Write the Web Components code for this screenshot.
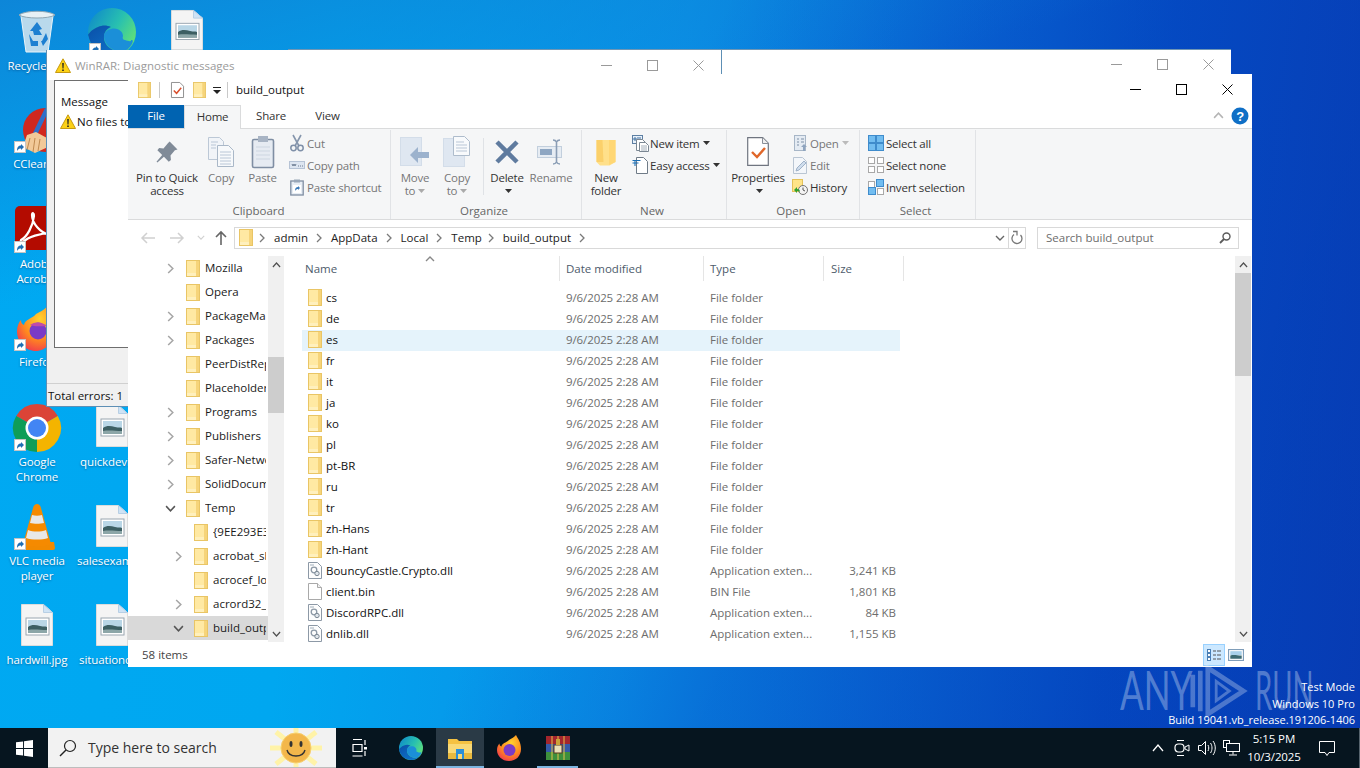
<!DOCTYPE html>
<html lang="en">
<head>
<meta charset="utf-8">
<title>build_output</title>
<style>
  html, body { margin: 0; height: 100%; overflow: hidden; }
  body { font: 11.5px "Open Sans", "Noto Sans", sans-serif; }
</style>
</head>
<body>
<win-desktop></win-desktop>
<script>
const PICTURE = `<path d="M.5.5h22l9 8v33H.5z" fill="#f4f4f4" stroke="#dcdcdc"/><path d="M22.5.5v8h9z" fill="#cfe3f5" stroke="#b8cfe4"/><rect x="5" y="14" width="23" height="17" fill="#fff" stroke="#9aa6b0"/><rect x="7" y="16" width="19" height="7" fill="#b9d6e6"/><path d="M7 23c4-3 8-2 12-1s5 0 7 1v6H7z" fill="#3d5f63"/><path d="M7 26c6-1 12 0 19 0v3H7z" fill="#8ca6a8"/>`
const EDGE_GRADIENT = `<defs><linearGradient id="g" x1="0" y1="0" x2="1" y2=".6"><stop offset="0" stop-color="#0c84cc"/><stop offset=".6" stop-color="#28c0b0"/><stop offset="1" stop-color="#5fe07a"/></linearGradient><linearGradient id="b" x1="0" y1="0" x2="1" y2="1"><stop offset="0" stop-color="#0a4fa8"/><stop offset="1" stop-color="#0f7ad0"/></linearGradient></defs>`
const ICONS = {
  folder: [14, 17, `<rect x=".5" y=".5" width="13" height="16" fill="#ffe9a3" stroke="#e9c565"/><path d="M10 1h3v15h-3z" fill="#f6d47a"/><path d="M1 13h9v3H1z" fill="#fff0bd"/>`],
  titlecheck: [14, 17, `<path d="M.5.5h9l4 4v12H.5z" fill="#fff" stroke="#8a8a8a"/><path d="M3 9l3 3 5-6" fill="none" stroke="#d9502e" stroke-width="1.6"/>`],
  dll: [14, 17, `<path d="M.5.5h9l4 4v12H.5z" fill="#fdfdfd" stroke="#8d99a6"/><circle cx="6" cy="8" r="2.8" fill="none" stroke="#8d99a6" stroke-width="1.3"/><circle cx="9" cy="11.5" r="2.2" fill="#dfe5ea" stroke="#7c8894"/><rect x="2" y="2" width="4" height="2" fill="#cfd6dc"/>`],
  file: [14, 17, `<path d="M.5.5h9l4 4v12H.5z" fill="#fff" stroke="#a9a9a9"/><path d="M9.5.5v4h4" fill="#f1f1f1" stroke="#a9a9a9"/>`],
  pin: [32, 32, `<path d="M19 4l9 9-3 1-5 6 .5 5-2.500 2-5.500-5.500L5 28l-1-1 6.500-7.500L5 14l2-2.500 5 .5 5-6z" fill="#808b98"/>`],
  copy: [28, 32, `<path d="M1.500 1.500h11l4 4v18h-15z" fill="#f1f4f8" stroke="#bcc8d6"/><path d="M10.500 9.500h11l5 5v16h-16z" fill="#f7f9fb" stroke="#aab8c8"/><path d="M4 6h7M4 9h5M4 12h5M13 16h11M13 19h11M13 22h11M13 25h11M13 28h11" stroke="#b9c6d6"/>`],
  paste: [24, 34, `<rect x="1.500" y="4.500" width="21" height="28" rx="1.500" fill="#e6ebf2" stroke="#7f8ea3" stroke-width="1.600"/><rect x="7" y="1" width="10" height="6" fill="#a8b4c4"/><path d="M5 12h14M5 16h14M5 20h14M5 24h14" stroke="#cdd6e1"/>`],
  cut: [16, 18, `<path d="M4 1l6 11M12 1L6 12" stroke="#8696ad" stroke-width="1.600" fill="none"/><circle cx="4.500" cy="14" r="2.700" fill="none" stroke="#7f90a8" stroke-width="1.500"/><circle cx="11.500" cy="14" r="2.700" fill="none" stroke="#7f90a8" stroke-width="1.500"/>`],
  copypath: [16, 12, `<rect x=".5" y="2.500" width="15" height="7" fill="#dde5f0" stroke="#b6c3d5"/><path d="M3 5l1 2 1-2 1 2 1-2M9 7h1M11 7h1M13 7h1" stroke="#6d7d93" fill="none"/>`],
  pasteshortcut: [14, 17, `<rect x=".8" y="2" width="12.400" height="14" fill="#e7edf4" stroke="#7f8ea3" stroke-width="1.300"/><rect x="4" y=".5" width="6" height="3" fill="#99a7b8"/><rect x="3" y="6" width="8" height="8" fill="#fff"/><path d="M5 12c0-3 1-4 3-4V7l2 2-2 2v-1c-1 0-2 .5-3 2z" fill="#3a79b8"/>`],
  moveto: [30, 30, `<rect x=".5" y=".5" width="21" height="28" fill="#dfe7f1" stroke="#d3dde9"/><path d="M29 15H18v-5l-8 8 8 8v-5h11z" fill="#9cb2cd"/>`],
  copyto: [28, 31, `<rect x=".5" y="2.500" width="21" height="28" fill="#dfe7f1" stroke="#d3dde9"/><path d="M10.500.5h11l5 5v14h-16z" fill="#f8fafc" stroke="#aebccc"/><path d="M13 6h8M13 9h11M13 12h11M13 15h11" stroke="#b9c6d6"/>`],
  del: [26, 26, `<path d="M3 3l20 20M23 3L3 23" stroke="#5f7b9f" stroke-width="4.500" fill="none"/>`],
  rename: [28, 26, `<rect x=".5" y="7.500" width="24" height="11" fill="#e6ecf3" stroke="#c2cfdd"/><rect x="3" y="10" width="12" height="6" fill="#8ea6c2"/><path d="M16 1c2 0 3 1 3.500 2 .5-1 1.500-2 3.500-2M19.500 3v20M16 25c2 0 3-1 3.500-2 .5 1 1.500 2 3.500 2" stroke="#8a9db5" stroke-width="1.600" fill="none"/>`],
  newfolder: [20, 28, `<path d="M.5 2h19v22l-6 3.500H4L.5 24z" fill="#ffe08a"/><path d="M.5 2h6l1 22H.5z" fill="#fbd06a"/><path d="M13 2h6.500v22L13 27z" fill="#ffd775"/>`],
  newitem: [17, 17, `<rect x=".5" y=".5" width="10" height="8" fill="#e8f1fa" stroke="#5d7fa3"/><path d="M2 3h2v2H2zM5 3h4" stroke="#3f6f9f" fill="none"/><path d="M4.500 4.500h6l3 3v8h-9z" fill="#fff" stroke="#7b8793"/><path d="M7.500 7.500h6l3 3v6h-9z" fill="#fff" stroke="#7b8793"/><path d="M9 11h6M9 13h6M9 15h6" stroke="#a4afba"/>`],
  easyaccess: [16, 17, `<path d="M4.500.5h7l4 4v12h-11z" fill="#fff" stroke="#6f7b87"/><path d="M.5 3.500h8M.5 6h6M3 3.500V9" stroke="#1c6fb5" stroke-width="1.100" fill="none"/>`],
  properties: [22, 29, `<path d="M.7.7h15l5.600 5.600v22H.7z" fill="#fff" stroke="#6f7580" stroke-width="1.200"/><path d="M15.500.7v5.800h5.800" fill="#f0f0f0" stroke="#8a9099"/><path d="M5 15l5 5 8-9" fill="none" stroke="#e0672a" stroke-width="2.400"/>`],
  open: [13, 16, `<rect x=".5" y=".5" width="11" height="15" fill="#e4ebf3" stroke="#a7b6c7"/><path d="M3 4h2M3 7h2M3 10h2M7 4h3M7 7h3" stroke="#7d8fa6"/><path d="M9 16v-4H7l3-3 3 3h-2v4z" fill="#8ea4bf"/>`],
  edit: [14, 17, `<path d="M.5.5h9l4 4v12H.5z" fill="#f3f6fa" stroke="#b9c5d3"/><path d="M3 14l1-3 7-7 2 2-7 7z" fill="#cfdded" stroke="#9fb2c8"/>`],
  history: [16, 16, `<rect x=".5" y=".5" width="10" height="12" fill="#ffe488" stroke="#e4c259"/><circle cx="11" cy="11" r="4.500" fill="#f3f3f3" stroke="#737373"/><path d="M11 8.500V11l2 1" stroke="#555" fill="none"/><path d="M2 11l3-3v2c2 0 3 1 3 3-1-1-2-1-3-1v2z" fill="#2fa02f"/>`],
  selectall: [16, 16, `<rect x=".5" y=".5" width="7" height="7" fill="#72bdf0" stroke="#3f8ccc"/><rect x="8.500" y=".5" width="7" height="7" fill="#72bdf0" stroke="#3f8ccc"/><rect x=".5" y="8.500" width="7" height="7" fill="#72bdf0" stroke="#3f8ccc"/><rect x="8.500" y="8.500" width="7" height="7" fill="#72bdf0" stroke="#3f8ccc"/>`],
  selectnone: [16, 16, `<g fill="#fff" stroke="#a8a8a8"><rect x=".5" y=".5" width="6" height="6"/><rect x="9.500" y=".5" width="6" height="6"/><rect x=".5" y="9.500" width="6" height="6"/><rect x="9.500" y="9.500" width="6" height="6"/></g>`],
  invert: [16, 16, `<rect x=".5" y="2.500" width="6" height="6" fill="#fff" stroke="#a8a8a8"/><rect x="8.500" y=".5" width="7" height="7" fill="#72bdf0" stroke="#3f8ccc"/><rect x=".5" y="8.500" width="7" height="7" fill="#72bdf0" stroke="#3f8ccc"/><rect x="9.500" y="9.500" width="6" height="6" fill="#fff" stroke="#a8a8a8"/>`],
  warning: [16, 15, `<path d="M8 .8l7.500 13.700H.5z" fill="#fcd116" stroke="#c79a10"/><path d="M7.200 5h1.600l-.3 5.500h-1zM7.200 11.500h1.600v1.600H7.200z" fill="#222"/>`],
  back: [14, 12, `<path d="M6 1L1 6l5 5M1 6h13" fill="none" stroke="currentColor" stroke-width="1.500"/>`],
  forward: [14, 12, `<path d="M8 1l5 5-5 5M13 6H0" fill="none" stroke="currentColor" stroke-width="1.500"/>`],
  up: [12, 14, `<path d="M1 6l5-5 5 5M6 1v13" fill="none" stroke="currentColor" stroke-width="1.600"/>`],
  chevronR: [6, 10, `<path d="M1 1l4 4-4 4" fill="none" stroke="currentColor" stroke-width="1.300"/>`],
  chevronD: [10, 6, `<path d="M1 1l4 4 4-4" fill="none" stroke="currentColor" stroke-width="1.400"/>`],
  chevronU: [10, 6, `<path d="M1 5l4-4 4 4" fill="none" stroke="currentColor" stroke-width="1.400"/>`],
  refresh: [12, 13, `<path d="M3 3.500A5 5 0 1 0 9.500 4" fill="none" stroke="currentColor" stroke-width="1.300"/><path d="M2 .5h4v4" fill="none" stroke="currentColor" stroke-width="1.300"/>`],
  search: [12, 12, `<circle cx="7.500" cy="4.500" r="3.500" fill="none" stroke="#5a5a5a" stroke-width="1.400"/><path d="M5 7l-4 4" stroke="#5a5a5a" stroke-width="1.800"/>`],
  help: [18, 18, `<circle cx="9" cy="9" r="8.500" fill="#0f6fc6"/><text x="9" y="13.500" text-anchor="middle" font-family="Liberation Sans" font-weight="700" font-size="13" fill="#fff">?</text>`],
  details: [14, 12, `<g fill="#fff" stroke="#4a7fb5"><rect x=".5" y=".5" width="3" height="3"/><rect x=".5" y="4.500" width="3" height="3"/><rect x=".5" y="8.500" width="3" height="3"/></g><path d="M6 2h3M10 2h4M6 6h3M10 6h4M6 10h3M10 10h4" stroke="#555"/>`],
  large: [14, 11, `<rect x=".5" y=".5" width="13" height="10" fill="#fff" stroke="#7f9db9"/><rect x="2" y="2" width="10" height="3.500" fill="#a8d0ea"/><path d="M2 9V6c3-1 6 0 10 0v3z" fill="#3c6a72"/>`],
  shortcut: [12, 12, `<rect x=".5" y=".5" width="11" height="11" fill="#fff" stroke="#c4c4c4"/><path d="M3 10c0-4 1.500-5.500 4-5.500V3l3 3-3 3V7.500C5.500 7.500 4 8 3 10z" fill="#1f6fb5"/>`],
  recycle: [38, 42, `<path d="M3 5l5 36h22l5-36z" fill="#c9e0ee" fill-opacity=".92" stroke="#e9f3f8"/><path d="M1 4c6-5 30-5 36 0-6 4-30 4-36 0z" fill="#e7f0f5" stroke="#8ea6b4"/><path d="M19 11l5 7-3 1 3 5h-8l-1-4-3 0zM11 23l4 7h5v5h-7zM28 22l-4 8h-1l2 5 5-7z" fill="#1d7fd1"/>`],
  edge: [48, 48, `${EDGE_GRADIENT}<circle cx="24" cy="24" r="24" fill="url(#g)"/><path d="M0 23C0 37 11 48 25 48c7 0 12-3 15-7-3 2-8 3-12 2-7-2-13-8-12-15 .5-5 4-8 7-9-4-2-9-2-13 0C5 21 1 24 0 28z" fill="url(#b)"/><path d="M16 28c0 7 6 13 12 15 4 1 9 0 12-2 3-3 5-6 5-9-2 2-5 1-8 0-2 0-3-2-2-4 0-4-5-9-12-7-4 1-7 4-7 7z" fill="#1b8fd8"/>`],
  picture: [32, 42, PICTURE],
  ccleaner: [30, 44, `<circle cx="22" cy="22" r="22" fill="#d0281f"/><path d="M24 1L11 28" stroke="#2f6fc9" stroke-width="4.500"/><path d="M4 27l9-3 11 6 1 9-13 6-12-6z" fill="#f2c998"/><path d="M7 30l-3 12M12 30l-2 14M17 31l-2 12" stroke="#c08a50"/>`],
  acrobat: [40, 44, `<rect width="40" height="44" rx="5" fill="#b30b00"/><path d="M6 34c6-3 12-14 13-24 .3-3-2-4-2-1 0 8 8 18 18 20 3 .5 3-2 0-2-9 0-22 4-27 9-2 2-3 0-2-2z" fill="none" stroke="#fff" stroke-width="2.200"/>`],
  firefox: [38, 46, `<defs><radialGradient id="f" cx=".6" cy=".3" r=".8"><stop offset="0" stop-color="#ffd22e"/><stop offset=".55" stop-color="#ff8a1e"/><stop offset="1" stop-color="#ef2f55"/></radialGradient></defs><path d="M31 0c3 8 7 13 7 24 0 12-9 22-19 22C8 46 0 37 0 26c0-5 2-9 4-11 0 3 1 4 3 5 1-6 8-6 12-11 5-3 9-4 12-9z" fill="url(#f)"/><circle cx="21" cy="26" r="8.500" fill="#7a3bc7"/><path d="M13 20c5-4 13-3 17 1-5 0-12 1-17-1z" fill="#c04ca8"/>`],
  chrome: [48, 48, `<path d="M24 24L3.200 12A24 24 0 0 1 44.800 12z" fill="#db4437"/><path d="M24 24L44.800 12A24 24 0 0 1 24 48z" fill="#f4b400"/><path d="M24 24L24 48A24 24 0 0 1 3.200 12z" fill="#0f9d58"/><circle cx="24" cy="24" r="11.500" fill="#fff"/><circle cx="24" cy="24" r="9" fill="#4285f4"/>`],
  vlc: [36, 46, `<path d="M1 38h34l1 6c0 1-1 2-2 2H2c-1 0-2-1-2-2z" fill="#f28a00"/><path d="M18 0c2 0 3 1 4 4l10 36c-4 3-24 3-28 0L14 4c1-3 2-4 4-4z" fill="#f58a00"/><path d="M13 11c3 1 7 1 10 0l2 8c-4 1-10 1-14 0zM9 26c5 2 13 2 18 0l2 8c-6 2-16 2-22 0z" fill="#e8e8e8"/>`],
  win: [18, 18, `<path d="M0 2.500l7.500-1v7H0zM8.500 1.400L18 0v8.500H8.500zM0 9.500h7.500v7l-7.500-1zM8.500 9.500H18V18l-9.500-1.400z" fill="#fff"/>`],
  magnifier: [18, 18, `<circle cx="11" cy="7" r="5.500" fill="none" stroke="#222" stroke-width="1.200"/><path d="M7 11l-6 6" stroke="#222" stroke-width="1.400"/>`],
  smiley: [60, 40, `<g stroke="#fff3a8" stroke-width="5"><path d="M30-6V46M4 20h52M10 4l40 32M50 4L10 36"/></g><circle cx="30" cy="20" r="15" fill="#f3b74b"/><circle cx="30" cy="20" r="15" fill="none" stroke="#f7cf6e"/><ellipse cx="25" cy="16" rx="1.500" ry="3" fill="#333"/><ellipse cx="35" cy="16" rx="1.500" ry="3" fill="#333"/><path d="M21 22c2 8 16 8 18 0" fill="none" stroke="#333" stroke-width="1.400"/>`],
  taskview: [16, 18, `<path d="M1 .5h9M.5 17h10M1 5.500h9v7H1zM13 1v5M13 12v5" stroke="#fff" stroke-width="1.200" fill="none"/><rect x="12" y="8" width="3" height="2.500" fill="#fff"/>`],
  edgesmall: [48, 48, `${EDGE_GRADIENT}<circle cx="24" cy="24" r="24" fill="url(#g)"/><path d="M0 23C0 37 11 48 25 48c7 0 12-3 15-7-3 2-8 3-12 2-7-2-13-8-12-15 .5-5 4-8 7-9-4-2-9-2-13 0C5 21 1 24 0 28z" fill="url(#b)"/><path d="M16 28c0 7 6 13 12 15 4 1 9 0 12-2 3-3 5-6 5-9-2 2-5 1-8 0-2 0-3-2-2-4 0-4-5-9-12-7-4 1-7 4-7 7z" fill="#1b8fd8"/>`],
  explorer: [24, 22, `<path d="M0 2h9l2 2h13v4H0z" fill="#f5c242"/><rect y="7" width="24" height="15" fill="#f9d976"/><rect x="0" y="16" width="24" height="6" fill="#e9b93f"/><rect x="8" y="12" width="8" height="10" fill="#2b8fd9"/><rect x="10" y="17" width="4" height="5" fill="#f9d976"/>`],
  firefoxsmall: [24, 26, `<defs><radialGradient id="f" cx=".6" cy=".3" r=".8"><stop offset="0" stop-color="#ffd22e"/><stop offset=".55" stop-color="#ff8a1e"/><stop offset="1" stop-color="#ef2f55"/></radialGradient></defs><path d="M19 0c2 4 5 7 5 14 0 7-5 12-12 12S0 21 0 15c0-3 1-5 2.500-6.500 0 2 .5 2.500 2 3C5 8 9 8 12 5c3-1.500 5-3 7-5z" fill="url(#f)"/><circle cx="12.500" cy="15" r="6" fill="#7a3bc7"/>`],
  winrar: [24, 24, `<rect width="24" height="8" fill="#a3262d"/><rect y="8" width="24" height="8" fill="#3559a8"/><rect y="16" width="24" height="8" fill="#3d8f3c"/><path d="M6 0v24M12 0v24M18 0v24" stroke="#e7c14a" stroke-width="1"/><rect x="8" y="9" width="8" height="8" fill="#e9dfb8" stroke="#5c3b1f"/><path d="M10 3h4v6h-4z" fill="#caa23a"/>`],
  caretup: [12, 8, `<path d="M1 7l5-6 5 6" fill="none" stroke="#fff" stroke-width="1.300"/>`],
  meet: [16, 18, `<path d="M3 1.500h7M3 16.500h7" stroke="#fff"/><rect x="1" y="5" width="9" height="8" rx="3.500" fill="none" stroke="#fff" stroke-width="1.200"/><path d="M11 8l4-2v6l-4-2z" fill="none" stroke="#fff"/>`],
  volume: [17, 16, `<path d="M.5 5.500h3l4-4v13l-4-4h-3z" fill="none" stroke="#fff"/><path d="M10 5c1 2 1 4 0 6M12.500 3c2 3 2 7 0 10M15 1c3 4 3 10 0 14" fill="none" stroke="#fff"/>`],
  network: [17, 16, `<rect x=".5" y=".5" width="6" height="7" fill="none" stroke="#fff"/><rect x="3.500" y="3.500" width="13" height="8" fill="#071623" stroke="#fff"/><path d="M10 11.500v3M6 15h8" stroke="#fff"/>`],
  notify: [16, 15, `<path d="M.5.5h15v11H10l-2 3-2-3H.5z" fill="none" stroke="#fff"/>`],
  playlogo: [62, 54, `<g fill="none" stroke="#dfe9f5" stroke-opacity=".32" stroke-width="5"><path d="M3 10v34M11 6v42"/><path d="M19 3l38 24-38 24z"/><path d="M28 17l14 10-14 10z" stroke-width="3"/></g>`],
}

class UiIcon extends HTMLElement {
  constructor() {
    super()
    this.attachShadow({ mode: 'open' })
  }

  connectedCallback() {
    const [w, h, body] = ICONS[this.getAttribute('name')]
    const width = this.getAttribute('w') || w
    const height = this.getAttribute('h') || h
    this.shadowRoot.innerHTML = `
      <style>
        :host { display: inline-block; line-height: 0; flex: none; width: ${width}px; height: ${height}px; }
        svg { display: block; width: 100%; height: 100%; overflow: visible; }
      </style>
      <svg viewBox="0 0 ${w} ${h}" preserveAspectRatio="none">${body}</svg>`
  }
}

class DesktopIcon extends HTMLElement {
  constructor() {
    super()
    this.attachShadow({ mode: 'open' })
    this.shadowRoot.innerHTML = `
      <style>
        :host { position: absolute; width: 74px; display: flex; flex-direction: column; align-items: center; color: #fff; font: 11.5px/15px "Open Sans", sans-serif; letter-spacing: -.1px; }
        .cell { height: 48px; display: flex; align-items: center; justify-content: center; width: 100%; position: relative; }
        .arrow { position: absolute; left: 14px; top: 35px; display: none; }
        :host([shortcut]) .arrow { display: block; }
        .label { padding-top: 2px; text-align: center; text-shadow: 0 1px 2px rgba(0, 30, 80, .45); }
        :host([clip]) .label { align-self: flex-start; margin-left: var(--lm, 5px); white-space: nowrap; }
      </style>
      <div class="cell"><slot name="icon"></slot><ui-icon class="arrow" name="shortcut"></ui-icon></div>
      <div class="label"><slot></slot></div>`
  }

  connectedCallback() {
    this.style.left = this.getAttribute('x') + 'px'
    this.style.top = this.getAttribute('y') + 'px'
  }
}

class WindowControls extends HTMLElement {
  constructor() {
    super()
    this.attachShadow({ mode: 'open' })
    this.shadowRoot.innerHTML = `
      <style>
        :host { display: flex; color: #9a9a9a; }
        :host([active]) { color: #000; }
        div { width: 46px; display: flex; align-items: center; justify-content: center; }
        svg { width: 11px; height: 11px; }
      </style>
      <div><svg viewBox="0 0 11 11"><path d="M0 5.500h11" stroke="currentColor"/></svg></div>
      <div><svg viewBox="0 0 11 11"><rect x=".5" y=".5" width="10" height="10" fill="none" stroke="currentColor"/></svg></div>
      <div><svg viewBox="0 0 11 11"><path d="M.5.5l10 10M10.500.5l-10 10" stroke="currentColor" fill="none"/></svg></div>`
  }
}

class BackWindow extends HTMLElement {
  constructor() {
    super()
    this.attachShadow({ mode: 'open' })
    this.shadowRoot.innerHTML = `
      <style>
        :host { position: absolute; left: 288px; top: 49px; width: 943px; height: 400px; background: #fff; border-top: 1px solid #6f96b5; box-sizing: border-box; display: flex; flex-direction: column; }
        window-controls { height: 28px; align-self: flex-end; }
      </style>
      <window-controls></window-controls>`
  }
}

class RarWindow extends HTMLElement {
  constructor() {
    super()
    this.attachShadow({ mode: 'open' })
    this.shadowRoot.innerHTML = `
      <style>
        :host { position: absolute; left: 46px; top: 50px; width: 676px; height: 357px; background: #f0f0f0; box-sizing: border-box; border: 1px solid #5d8fb5; border-top: 0; display: flex; flex-direction: column; color: #111; }
        .title { height: 30px; background: #fff; display: flex; align-items: center; padding-left: 8px; gap: 4px; color: #9b9b9b; }
        .title span { flex: 1; }
        .box { margin-left: 7px; width: 660px; height: 268px; background: #fff; border: 1px solid #fff; border-top-color: #6e6e6e; border-left-color: #6e6e6e; border-bottom-color: #6e6e6e; box-sizing: border-box; padding: 13px 0 0 6px; }
        .row { display: flex; align-items: center; gap: 1px; margin: 5px 0 0 -1px; }
        .gap { flex: 1; }
        .status { height: 23px; border-top: 1px solid #d0d0d0; display: flex; align-items: center; padding: 1px 0 0 1px; box-sizing: border-box; }
      </style>
      <div class="title"><ui-icon name="warning"></ui-icon><span>WinRAR: Diagnostic messages</span><window-controls></window-controls></div>
      <div class="box"><div>Message</div><div class="row"><ui-icon name="warning"></ui-icon><span>No files to</span></div></div>
      <div class="gap"></div>
      <div class="status">Total errors: 1</div>`
  }
}

class RibbonGroup extends HTMLElement {
  constructor() {
    super()
    this.attachShadow({ mode: 'open' })
    const pad = this.getAttribute('pad') || 0
    const shift = this.getAttribute('shift') || 4
    this.shadowRoot.innerHTML = `
      <style>
        :host { display: flex; flex-direction: column; box-sizing: border-box; height: 89px; margin-top: 1px; border-right: 1px solid #e1e3e6; padding-top: 2px; flex: none; }
        .body { flex: 1; display: flex; padding-left: ${pad}px; }
        .label { text-align: center; color: #666; height: 16px; line-height: 16px; padding-right: ${shift}px; }
      </style>
      <div class="body"><slot></slot></div>
      <div class="label">${this.getAttribute('label')}</div>`
  }
}

class RibbonBig extends HTMLElement {
  constructor() {
    super()
    this.attachShadow({ mode: 'open' })
    this.shadowRoot.innerHTML = `
      <style>
        :host { display: flex; flex-direction: column; align-items: center; flex: none; line-height: 13px; color: #333; text-align: center; letter-spacing: -.2px; }
        :host([dim]) { color: #777; }
        .icon { height: 39px; display: flex; align-items: center; justify-content: center; box-sizing: border-box; }
      </style>
      <div class="icon"><slot name="icon"></slot></div>
      <div><slot></slot></div>`
  }
}

class RibbonSmall extends HTMLElement {
  constructor() {
    super()
    this.attachShadow({ mode: 'open' })
    this.shadowRoot.innerHTML = `
      <style>
        :host { display: flex; align-items: center; height: 22px; color: #333; white-space: nowrap; letter-spacing: -.2px; }
        :host([dim]) { color: #777; }
        .icon { width: 18px; margin-right: 1px; display: flex; justify-content: center; }
      </style>
      <div class="icon"><slot name="icon"></slot></div>
      <slot></slot>`
  }
}

const caret = (color = '#333') => `<svg width="7" height="4" viewBox="0 0 7 4" style="margin-left:3px;vertical-align:2px"><path d="M0 0h7L3.500 4z" fill="${color}"/></svg>`

class ExplorerRibbon extends HTMLElement {
  constructor() {
    super()
    this.attachShadow({ mode: 'open' })
    this.shadowRoot.innerHTML = `
      <style>
        :host { display: block; height: 91px; background: #f5f6f7; border-bottom: 1px solid #dadbdc; box-sizing: border-box; flex: none; }
        .row { display: flex; }
        .col { display: flex; flex-direction: column; }
        .sep { width: 1px; height: 57px; background: #dfe2e6; margin: 6px 3px 0 6px; }
        .d { display: block; margin: 0 auto; }
      </style>
      <div class="row">
        <ribbon-group label="Clipboard" pad="6" shift="1" style="width:263px">
          <ribbon-big style="width:66px"><ui-icon slot="icon" name="pin" w="28" h="28"></ui-icon>Pin to Quick<br>access</ribbon-big>
          <ribbon-big dim style="width:42px"><ui-icon slot="icon" name="copy"></ui-icon>Copy</ribbon-big>
          <ribbon-big dim style="width:41px"><ui-icon slot="icon" name="paste"></ui-icon>Paste</ribbon-big>
          <div class="col" style="margin-left:5px">
            <ribbon-small dim><ui-icon slot="icon" name="cut"></ui-icon>Cut</ribbon-small>
            <ribbon-small dim><ui-icon slot="icon" name="copypath"></ui-icon>Copy path</ribbon-small>
            <ribbon-small dim><ui-icon slot="icon" name="pasteshortcut"></ui-icon>Paste shortcut</ribbon-small>
          </div>
        </ribbon-group>
        <ribbon-group label="Organize" pad="5" style="width:191px">
          <ribbon-big dim style="width:38px"><ui-icon slot="icon" name="moveto"></ui-icon>Move<br>to${caret('#aaa')}</ribbon-big>
          <ribbon-big dim style="width:40px;margin-left:3px"><ui-icon slot="icon" name="copyto"></ui-icon>Copy<br>to${caret('#aaa')}</ribbon-big>
          <div class="sep"></div>
          <ribbon-big style="width:40px"><ui-icon slot="icon" name="del"></ui-icon>Delete<span class="d">${caret()}</span></ribbon-big>
          <ribbon-big dim style="width:46px;margin-left:1px"><ui-icon slot="icon" name="rename"></ui-icon>Rename</ribbon-big>
        </ribbon-group>
        <ribbon-group label="New" pad="4" style="width:145px">
          <ribbon-big style="width:40px"><ui-icon slot="icon" name="newfolder"></ui-icon>New<br>folder</ribbon-big>
          <div class="col" style="margin-left:5px">
            <ribbon-small><ui-icon slot="icon" name="newitem"></ui-icon>New item${caret()}</ribbon-small>
            <ribbon-small><ui-icon slot="icon" name="easyaccess"></ui-icon>Easy access${caret()}</ribbon-small>
          </div>
        </ribbon-group>
        <ribbon-group label="Open" pad="3" style="width:133px">
          <ribbon-big style="width:56px"><ui-icon slot="icon" name="properties"></ui-icon>Properties<span class="d">${caret()}</span></ribbon-big>
          <div class="col" style="margin-left:5px">
            <ribbon-small dim><ui-icon slot="icon" name="open"></ui-icon>Open${caret('#bbb')}</ribbon-small>
            <ribbon-small dim><ui-icon slot="icon" name="edit"></ui-icon>Edit</ribbon-small>
            <ribbon-small><ui-icon slot="icon" name="history"></ui-icon>History</ribbon-small>
          </div>
        </ribbon-group>
        <ribbon-group label="Select" pad="7" style="width:116px">
          <div class="col">
            <ribbon-small><ui-icon slot="icon" name="selectall"></ui-icon>Select all</ribbon-small>
            <ribbon-small><ui-icon slot="icon" name="selectnone"></ui-icon>Select none</ribbon-small>
            <ribbon-small><ui-icon slot="icon" name="invert"></ui-icon>Invert selection</ribbon-small>
          </div>
        </ribbon-group>
      </div>`
  }
}

class AddressBar extends HTMLElement {
  constructor() {
    super()
    this.attachShadow({ mode: 'open' })
    const crumbs = ['admin', 'AppData', 'Local', 'Temp', 'build_output']
    this.shadowRoot.innerHTML = `
      <style>
        :host { display: flex; align-items: center; height: 36px; flex: none; color: #333; box-sizing: border-box; padding-bottom: 1px; padding-left: 5px; }
        .nav { width: 29px; display: flex; justify-content: center; color: #d0d0d0; }
        .nav.fwd { width: 30px; }
        .nav.small { width: 17px; }
        .nav.up { width: 24px; color: #666; margin-right: 1px; }
        .box { height: 22px; box-sizing: border-box; border: 1px solid #d9d9d9; display: flex; align-items: center; background: #fff; }
        .path { width: 775px; padding-left: 4px; color: #222; }
        .path ui-icon.sep { color: #7a7a7a; margin: 0 9px 0 8px; }
        .path ui-icon.first { margin: 0 9px 0 6px; }
        .path span:nth-of-type(4) { margin-right: -2px; }
        .drop { margin-left: auto; margin-right: 3px; color: #666; }
        .refresh { width: 18px; margin-left: -1px; justify-content: center; color: #777; }
        .search { width: 202px; margin-left: 11px; padding: 0 7px 0 8px; justify-content: space-between; color: #6d6d6d; }
      </style>
      <div class="nav"><ui-icon name="back"></ui-icon></div>
      <div class="nav fwd"><ui-icon name="forward"></ui-icon></div>
      <div class="nav small"><ui-icon name="chevronD" w="8" h="5"></ui-icon></div>
      <div class="nav up"><ui-icon name="up"></ui-icon></div>
      <div class="box path">
        <ui-icon name="folder"></ui-icon>
        <ui-icon class="sep first" name="chevronR"></ui-icon>
        ${crumbs.map(c => `<span>${c}</span><ui-icon class="sep" name="chevronR"></ui-icon>`).join('')}
        <ui-icon class="drop" name="chevronD"></ui-icon>
      </div>
      <div class="box refresh"><ui-icon name="refresh"></ui-icon></div>
      <div class="box search"><span>Search build_output</span><ui-icon name="search"></ui-icon></div>`
  }
}

class ScrollBar extends HTMLElement {
  constructor() {
    super()
    this.attachShadow({ mode: 'open' })
    this.shadowRoot.innerHTML = `
      <style>
        :host { display: flex; flex-direction: column; width: 16px; background: #f0f0f0; flex: none; color: #505050; }
        .btn { height: 17px; display: flex; align-items: center; justify-content: center; flex: none; }
        .track { flex: 1; }
        .thumb { background: #cdcdcd; }
      </style>
      <div class="btn"><ui-icon name="chevronU" w="9" h="6"></ui-icon></div>
      <div class="track"><div class="thumb" style="margin-top:${this.getAttribute('start')}px;height:${this.getAttribute('size')}px"></div></div>
      <div class="btn"><ui-icon name="chevronD" w="9" h="6"></ui-icon></div>`
  }
}

class TreeRow extends HTMLElement {
  constructor() {
    super()
    this.attachShadow({ mode: 'open' })
  }

  connectedCallback() {
    const level = Number(this.getAttribute('level') || 0)
    const state = this.getAttribute('state')
    const chevron = state === 'closed' ? '<ui-icon name="chevronR" w="7" h="11" style="color:#a6a6a6"></ui-icon>'
      : state === 'open' ? '<ui-icon name="chevronD" w="11" h="7" style="color:#555"></ui-icon>' : ''
    this.shadowRoot.innerHTML = `
      <style>
        :host { display: flex; align-items: center; height: 24px; padding-left: ${34 + level * 8}px; padding-right: 2px; white-space: nowrap; color: #1a1a1a; }
        :host([selected]) { background: #d9d9d9; }
        .chev { width: 16px; display: flex; justify-content: center; margin-right: 8px; flex: none; }
        span { margin-left: 5px; padding-bottom: 2px; overflow: hidden; min-width: 0; }
      </style>
      <div class="chev">${chevron}</div>
      <ui-icon name="folder"></ui-icon>
      <span><slot></slot></span>`
  }
}

class NavPane extends HTMLElement {
  constructor() {
    super()
    this.attachShadow({ mode: 'open' })
    const rows = [
      ['Mozilla', 0, 'closed'], ['Opera', 0, ''], ['PackageManager', 0, 'closed'], ['Packages', 0, 'closed'],
      ['PeerDistRepub', 0, ''], ['PlaceholderTile', 0, ''], ['Programs', 0, 'closed'], ['Publishers', 0, 'closed'],
      ['Safer-Networking', 0, 'closed'], ['SolidDocuments', 0, 'closed'], ['Temp', 0, 'open'], ['{9EE293E3-', 1, ''],
      ['acrobat_sbx', 1, 'closed'], ['acrocef_low', 1, ''], ['acrord32_sbx', 1, 'closed'], ['build_output', 1, 'open'],
    ]
    this.shadowRoot.innerHTML = `
      <style>
        :host { display: flex; width: 156px; flex: none; }
        .rows { width: 140px; overflow: hidden; }
      </style>
      <div class="rows">
        ${rows.map(([t, l, s], i) => `<tree-row level="${l}" state="${s}" ${i === 15 ? 'selected' : ''}>${t}</tree-row>`).join('')}
      </div>
      <scroll-bar start="84" size="56"></scroll-bar>`
  }
}

class FileRow extends HTMLElement {
  constructor() {
    super()
    this.attachShadow({ mode: 'open' })
  }

  connectedCallback() {
    const a = n => this.getAttribute(n) || ''
    this.shadowRoot.innerHTML = `
      <style>
        :host { display: grid; grid-template-columns: 264px 144px 120px 70px; height: 21px; align-items: center; width: 598px; color: #6d6d6d; white-space: nowrap; }
        :host([hot]) { background: #e5f3fb; }
        div { padding-bottom: 2px; }
        .date { letter-spacing: -.1px; }
        .name { display: flex; align-items: center; padding-left: 6px; gap: 4px; color: #111; }
        .size { text-align: right; padding-right: 4px; }
      </style>
      <div class="name"><ui-icon name="${a('icon')}"></ui-icon><slot></slot></div>
      <div class="date">${a('date')}</div><div>${a('type')}</div><div class="size">${a('size')}</div>`
  }
}

class FileList extends HTMLElement {
  constructor() {
    super()
    this.attachShadow({ mode: 'open' })
    const date = '9/6/2025 2:28 AM'
    const folders = ['cs', 'de', 'es', 'fr', 'it', 'ja', 'ko', 'pl', 'pt-BR', 'ru', 'tr', 'zh-Hans', 'zh-Hant']
    const files = [
      ['BouncyCastle.Crypto.dll', 'dll', 'Application exten...', '3,241 KB'],
      ['client.bin', 'file', 'BIN File', '1,801 KB'],
      ['DiscordRPC.dll', 'dll', 'Application exten...', '84 KB'],
      ['dnlib.dll', 'dll', 'Application exten...', '1,155 KB'],
    ]
    this.shadowRoot.innerHTML = `
      <style>
        :host { flex: 1; display: flex; flex-direction: column; overflow: hidden; padding-left: 18px; position: relative; }
        .head { display: flex; height: 27px; margin-left: -4px; flex: none; color: #4d5b6b; }
        .head div { border-right: 1px solid #e5e5e5; box-sizing: border-box; padding: 5px 0 0 6px; height: 25px; line-height: 15px; }
        .head div:first-child, .head div:last-child { padding-left: 7px; }
        .arrow { position: absolute; left: 141px; top: 0; color: #888; }
        .rows { padding-top: 4.5px; }
      </style>
      <div class="head">
        <div style="width:262px">Name</div><div style="width:144px">Date modified</div><div style="width:120px">Type</div><div style="width:80px">Size</div>
      </div>
      <ui-icon class="arrow" name="chevronU" w="10" h="6"></ui-icon>
      <div class="rows">
        ${folders.map(f => `<file-row icon="folder" date="${date}" type="File folder" ${f === 'es' ? 'hot' : ''}>${f}</file-row>`).join('')}
        ${files.map(([n, i, t, s]) => `<file-row icon="${i}" date="${date}" type="${t}" size="${s}">${n}</file-row>`).join('')}
      </div>`
  }
}

class ExplorerWindow extends HTMLElement {
  constructor() {
    super()
    this.attachShadow({ mode: 'open' })
    this.shadowRoot.innerHTML = `
      <style>
        :host { position: absolute; left: 128px; top: 74px; width: 1124px; height: 593px; background: #fff; display: flex; flex-direction: column; color: #222; }
        .title { height: 31px; display: flex; align-items: center; padding-left: 10px; flex: none; }
        .title .bar { width: 1px; height: 16px; background: #c9c9c9; }
        .title .name { flex: 1; margin-left: 8px; color: #111; }
        .title window-controls { margin-right: 2px; }
        .tabs { height: 24px; display: flex; align-items: stretch; border-bottom: 1px solid #dadbdc; flex: none; box-sizing: border-box; letter-spacing: -.2px; }
        .tabs div { display: flex; align-items: center; justify-content: center; width: 57px; color: #333; padding-bottom: 2px; box-sizing: border-box; }
        .tabs .file { width: 56px; background: #0063b1; color: #fff; }
        .tabs .home { background: #f5f6f7; border: 1px solid #dadbdc; border-bottom: 0; margin-bottom: -1px; }
        .tabs .tools { margin-left: auto; width: auto; gap: 7px; padding-right: 3px; color: #b5b5b5; }
        .main { flex: 1; display: flex; min-height: 0; }
        .status { height: 25px; flex: none; display: flex; align-items: center; padding-left: 14px; color: #444; }
        .views { margin-left: auto; display: flex; align-items: center; margin-right: 8px; gap: 3px; }
        .views .on { width: 22px; height: 22px; box-sizing: border-box; border: 1px solid #99d1ff; background: #cce8ff; display: flex; align-items: center; justify-content: center; }
        .pad { width: 1px; flex: none; }
      </style>
      <div class="title">
        <ui-icon name="folder" w="13" h="16"></ui-icon>
        <div class="bar" style="margin:0 11px 0 8px"></div>
        <ui-icon name="titlecheck" w="13" h="16"></ui-icon>
        <ui-icon name="folder" w="13" h="16" style="margin-left:9px"></ui-icon>
        <svg width="8" height="7" viewBox="0 0 8 7" style="margin:1px 6px 0 7px"><path d="M0 0h8v1H0zM0 3h8L4 7z" fill="#222"/></svg>
        <div class="bar"></div>
        <div class="name">build_output</div>
        <window-controls active></window-controls>
      </div>
      <div class="tabs">
        <div class="file">File</div><div class="home">Home</div><div style="width:60px">Share</div><div style="width:53px">View</div>
        <div class="tools"><ui-icon name="chevronU" w="11" h="7"></ui-icon><ui-icon name="help"></ui-icon></div>
      </div>
      <explorer-ribbon></explorer-ribbon>
      <address-bar></address-bar>
      <div class="main">
        <nav-pane></nav-pane>
        <file-list></file-list>
        <scroll-bar start="0" size="103"></scroll-bar>
        <div class="pad"></div>
      </div>
      <div class="status">58 items
        <div class="views"><div class="on"><ui-icon name="details"></ui-icon></div><ui-icon name="large" w="16" h="12"></ui-icon></div>
      </div>`
  }
}

class TaskItem extends HTMLElement {
  constructor() {
    super()
    this.attachShadow({ mode: 'open' })
    this.shadowRoot.innerHTML = `
      <style>
        :host { display: flex; align-items: center; justify-content: center; width: 48px; box-sizing: border-box; border-bottom: 2px solid transparent; padding-top: 2px; }
        :host([active]) { background: #2a3a46; border-bottom-color: #7cb4e0; }
        :host([running]) { border-image: linear-gradient(90deg, transparent 4px, #7cb4e0 4px, #7cb4e0 43px, transparent 43px) 1; }
      </style>
      <slot></slot>`
  }
}

class TaskBar extends HTMLElement {
  constructor() {
    super()
    this.attachShadow({ mode: 'open' })
    this.shadowRoot.innerHTML = `
      <style>
        :host { display: flex; height: 40px; flex: none; background: #06151f; color: #fff; position: relative; z-index: 5; }
        .start { width: 48px; display: flex; align-items: center; justify-content: center; }
        .search { width: 288px; background: #f2f2f2; border-bottom: 1px solid #bdbdbd; box-sizing: border-box; display: flex; align-items: center; padding-left: 11px; color: #333; font: 14px "Open Sans", sans-serif; overflow: hidden; }
        .search ui-icon.glass { margin-right: 11px; }
        .search ui-icon.smile { margin-left: auto; margin-right: 10px; }
        .items { display: flex; }
        .tray { margin-left: auto; display: flex; align-items: center; padding-right: 13px; border-right: 1px solid #56636d; height: 100%; }
        .clock { width: 68px; text-align: center; font: 11.5px/18px "Open Sans", sans-serif; letter-spacing: -.1px; }
        .note { width: 38px; display: flex; justify-content: center; }
      </style>
      <div class="start"><ui-icon name="win" w="17" h="17"></ui-icon></div>
      <div class="search">
        <ui-icon class="glass" name="magnifier"></ui-icon>
        <span>Type here to search</span>
        <ui-icon class="smile" name="smiley"></ui-icon>
      </div>
      <div class="items">
        <task-item><ui-icon name="taskview"></ui-icon></task-item>
        <task-item style="width:52px"><ui-icon name="edgesmall" w="24" h="24" style="margin-left:2px"></ui-icon></task-item>
        <task-item active><ui-icon name="explorer"></ui-icon></task-item>
        <task-item style="width:50px"><ui-icon name="firefoxsmall"></ui-icon></task-item>
        <task-item running><ui-icon name="winrar"></ui-icon></task-item>
      </div>
      <div class="tray">
        <ui-icon name="caretup" style="margin-right:10px"></ui-icon>
        <ui-icon name="meet" style="margin-right:8px"></ui-icon>
        <ui-icon name="volume" style="margin-right:8px"></ui-icon>
        <ui-icon name="network"></ui-icon>
        <div class="clock">5:15 PM<br>10/3/2025</div>
        <div class="note"><ui-icon name="notify"></ui-icon></div>
      </div>`
  }
}

class WinDesktop extends HTMLElement {
  constructor() {
    super()
    this.attachShadow({ mode: 'open' })
    this.shadowRoot.innerHTML = `
      <style>
        :host { display: flex; flex-direction: column; height: 100vh; width: 100vw; overflow: hidden; }
        .area { flex: 1; position: relative; overflow: hidden;
          background:
            linear-gradient(112deg, rgba(255,255,255,0) 0 44%, rgba(0,60,190,.25) 60%, rgba(0,40,170,.35) 100%),
            linear-gradient(165deg, #0d86d8 0%, rgba(13,134,216,0) 28%),
            linear-gradient(96deg, #00a9f2 0%, #00a7f0 24%, #0a8fe6 48%, #0a6cd6 66%, #0651c6 82%, #0a45b8 100%); }
        .logo { position: absolute; left: 1120px; top: 662px; display: flex; align-items: flex-start; color: rgba(225, 235, 248, .36); font: 400 54px/52px "Lato", sans-serif; z-index: 4; }
        .logo span { display: inline-block; transform-origin: left; margin-top: 2px; }
        .logo .any { transform: scaleX(.65); width: 70px; }
        .logo .run { transform: scaleX(.51); margin-left: 7px; }
        .mark { position: absolute; right: 5px; top: 679px; text-align: right; color: #fff; font: 11px/16.5px "Open Sans", sans-serif; z-index: 4; }
      </style>
      <div class="area">
        <desktop-icon x="0" y="8"><ui-icon slot="icon" name="recycle"></ui-icon>Recycle Bin</desktop-icon>
        <desktop-icon x="75" y="8" shortcut><ui-icon slot="icon" name="edge"></ui-icon></desktop-icon>
        <desktop-icon x="150" y="6"><ui-icon slot="icon" name="picture" w="32" h="40"></ui-icon></desktop-icon>
        <desktop-icon x="0" y="106" shortcut><ui-icon slot="icon" name="ccleaner" style="margin-left:2px"></ui-icon>CCleaner</desktop-icon>
        <desktop-icon x="0" y="206" shortcut><ui-icon slot="icon" name="acrobat" style="margin:-4px 0 0 -4px"></ui-icon>Adobe Acrobat</desktop-icon>
        <desktop-icon x="0" y="304" shortcut><ui-icon slot="icon" name="firefox" style="margin-left:-3px"></ui-icon>Firefox</desktop-icon>
        <desktop-icon x="0" y="404" shortcut><ui-icon slot="icon" name="chrome"></ui-icon>Google Chrome</desktop-icon>
        <desktop-icon x="75" y="404" clip><ui-icon slot="icon" name="picture" style="margin-top:-4px"></ui-icon>quickdevice</desktop-icon>
        <desktop-icon x="0" y="503" shortcut><ui-icon slot="icon" name="vlc"></ui-icon>VLC media player</desktop-icon>
        <desktop-icon x="75" y="503" clip style="--lm:2px"><ui-icon slot="icon" name="picture" style="margin-top:-2px"></ui-icon>salesexam</desktop-icon>
        <desktop-icon x="0" y="602"><ui-icon slot="icon" name="picture" style="margin-top:-2px"></ui-icon>hardwill.jpg</desktop-icon>
        <desktop-icon x="75" y="602" clip style="--lm:4px"><ui-icon slot="icon" name="picture" style="margin-top:-2px"></ui-icon>situationcc</desktop-icon>
        <back-window></back-window>
        <rar-window></rar-window>
        <explorer-window></explorer-window>
        <div class="logo"><span class="any">ANY</span><ui-icon name="playlogo" w="58" h="52" style="margin-top:3px"></ui-icon><span class="run">RUN</span></div>
        <div class="mark">Test Mode<br>Windows 10 Pro<br>Build 19041.vb_release.191206-1406</div>
      </div>
      <task-bar></task-bar>`
  }
}

customElements.define('ui-icon', UiIcon)
customElements.define('desktop-icon', DesktopIcon)
customElements.define('window-controls', WindowControls)
customElements.define('back-window', BackWindow)
customElements.define('rar-window', RarWindow)
customElements.define('ribbon-group', RibbonGroup)
customElements.define('ribbon-big', RibbonBig)
customElements.define('ribbon-small', RibbonSmall)
customElements.define('explorer-ribbon', ExplorerRibbon)
customElements.define('address-bar', AddressBar)
customElements.define('scroll-bar', ScrollBar)
customElements.define('tree-row', TreeRow)
customElements.define('nav-pane', NavPane)
customElements.define('file-row', FileRow)
customElements.define('file-list', FileList)
customElements.define('explorer-window', ExplorerWindow)
customElements.define('task-item', TaskItem)
customElements.define('task-bar', TaskBar)
customElements.define('win-desktop', WinDesktop)
</script>
</body>
</html>
